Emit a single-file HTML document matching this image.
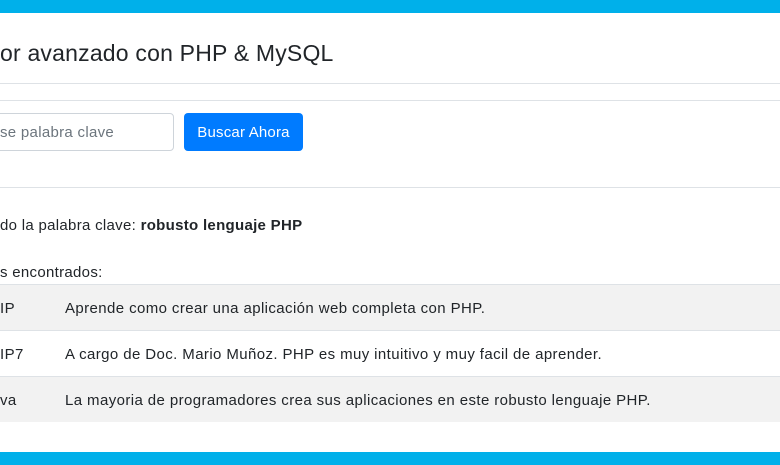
<!DOCTYPE html>
<html><head><meta charset="utf-8"><style>
*{margin:0;padding:0;box-sizing:border-box}
body{width:780px;height:465px;overflow:hidden;background:#fff;font-family:"Liberation Sans",sans-serif;color:#212529;position:relative}
.a{position:absolute;white-space:nowrap}
.hr{position:absolute;left:0;width:780px;height:1px;background:#dee2e6}
.row{position:absolute;left:0;width:780px;height:46px;border-top:1px solid #dee2e6;font-size:15px;letter-spacing:0.4px}
.row span{position:absolute;top:15px}
</style></head><body>
<div class="a" style="top:0;left:0;width:780px;height:13px;background:#00b0ea"></div>
<div class="a" style="top:40px;left:0;font-size:23px;letter-spacing:0.2px">or avanzado con PHP &amp; MySQL</div>
<div class="hr" style="top:83px"></div>
<div class="hr" style="top:100px"></div>
<div class="a" style="top:113px;left:-10px;width:184px;height:38px;border:1px solid #ced4da;border-radius:4px"></div>
<div class="a" style="top:124px;left:0;font-size:15px;color:#6c757d;letter-spacing:0.3px">se palabra clave</div>
<div class="a" style="top:113px;left:184px;width:119px;height:38px;background:#007bff;border-radius:4px;color:#fff;font-size:15px;text-align:center;line-height:40px;letter-spacing:0.2px">Buscar Ahora</div>
<div class="hr" style="top:187px"></div>
<div class="a" style="top:217px;left:0;font-size:15px;letter-spacing:0.3px">do la palabra clave: <b>robusto lenguaje PHP</b></div>
<div class="a" style="top:264px;left:0;font-size:15px;letter-spacing:0.3px">s encontrados:</div>
<div class="row" style="top:284px;background:#f2f2f2"><span style="left:0">IP</span><span style="left:65px">Aprende como crear una aplicación web completa con PHP.</span></div>
<div class="row" style="top:330px"><span style="left:0">IP7</span><span style="left:65px">A cargo de Doc. Mario Muñoz. PHP es muy intuitivo y muy facil de aprender.</span></div>
<div class="row" style="top:376px;background:#f2f2f2"><span style="left:0">va</span><span style="left:65px">La mayoria de programadores crea sus aplicaciones en este robusto lenguaje PHP.</span></div>
<div class="a" style="top:452px;left:0;width:780px;height:13px;background:#00b0ea"></div>
</body></html>
